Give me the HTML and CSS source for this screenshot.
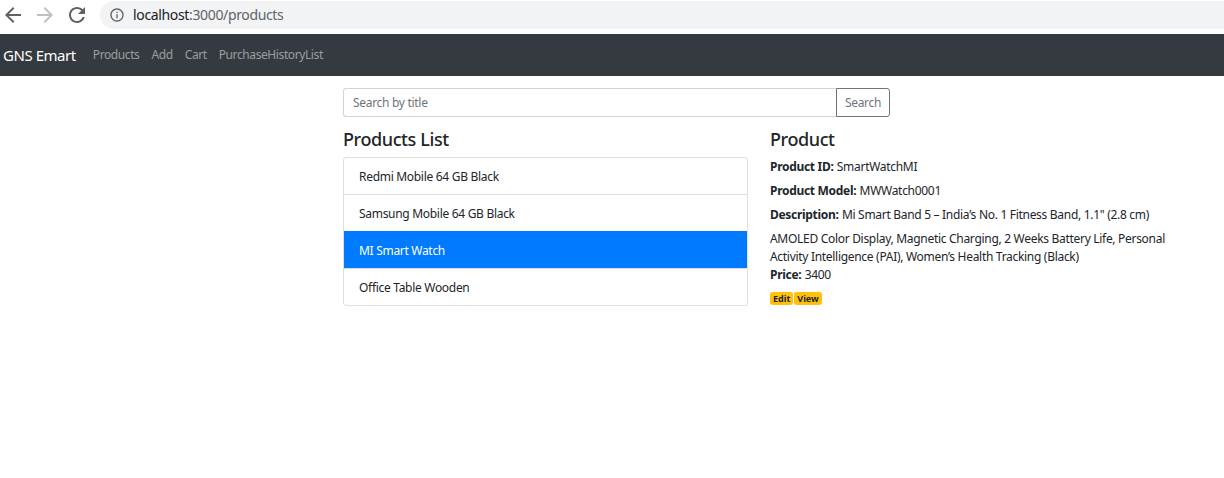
FILE: index.html
```html
<!DOCTYPE html>
<html lang="en">
<head>
<meta charset="utf-8">
<title>GNS Emart</title>
<link rel="stylesheet" href="styles.css">
</head>
<body>
<div class="chrome">
  <div class="nav-buttons">
    <svg class="cicon" viewBox="0 0 24 24" width="24" height="24"><path fill="#5f6368" d="M20 11H7.83l5.59-5.59L12 4l-8 8 8 8 1.41-1.41L7.83 13H20v-2z"/></svg>
    <svg class="cicon" viewBox="0 0 24 24" width="24" height="24"><path fill="#bdc1c6" d="M4 11h12.17l-5.59-5.59L12 4l8 8-8 8-1.41-1.41L16.17 13H4v-2z"/></svg>
    <svg class="cicon" viewBox="0 0 24 24" width="24" height="24"><path fill="#5f6368" d="M17.65 6.35C16.2 4.9 14.21 4 12 4c-4.42 0-7.99 3.58-7.99 8s3.57 8 7.99 8c3.73 0 6.84-2.55 7.73-6h-2.08c-.82 2.33-3.04 4-5.65 4-3.31 0-6-2.69-6-6s2.69-6 6-6c1.66 0 3.14.69 4.22 1.78L13 11h7V4l-2.35 2.35z"/></svg>
  </div>
  <div class="omnibox">
    <svg class="info" viewBox="0 0 24 24" width="16" height="16"><path fill="#5f6368" d="M11 7h2v2h-2zm0 4h2v6h-2zm1-9C6.48 2 2 6.48 2 12s4.48 10 10 10 10-4.48 10-10S17.52 2 12 2zm0 18c-4.41 0-8-3.59-8-8s3.59-8 8-8 8 3.59 8 8-3.59 8-8 8z"/></svg>
    <span class="url"><span class="host">localhost</span><span class="path">:3000/products</span></span>
  </div>
</div>

<nav class="navbar">
  <a class="brand" href="#">GNS Emart</a>
  <a class="nav-link" href="#">Products</a>
  <a class="nav-link" href="#">Add</a>
  <a class="nav-link" href="#">Cart</a>
  <a class="nav-link" href="#">PurchaseHistoryList</a>
</nav>

<main class="content">
  <div class="search">
    <input class="search-input" type="text" placeholder="Search by title">
    <button class="search-btn" type="button">Search</button>
  </div>
  <div class="columns">
    <section class="list-col">
      <h4 class="heading">Products List</h4>
      <ul class="list-group">
        <li class="list-item">Redmi Mobile 64 GB Black</li>
        <li class="list-item">Samsung Mobile 64 GB Black</li>
        <li class="list-item active">MI Smart Watch</li>
        <li class="list-item">Office Table Wooden</li>
      </ul>
    </section>
    <section class="detail-col">
      <h4 class="heading">Product</h4>
      <div class="fields">
        <div class="field"><label class="lbl"><strong>Product ID:</strong></label> SmartWatchMI</div>
        <div class="field"><label class="lbl"><strong>Product Model:</strong></label> MWWatch0001</div>
        <div class="field"><label class="lbl"><strong>Description:</strong></label> Mi Smart Band 5 – India’s No. 1 Fitness Band, 1.1" (2.8 cm) AMOLED Color Display, Magnetic Charging, 2 Weeks Battery Life, Personal Activity Intelligence (PAI), Women’s Health Tracking (Black)</div>
        <div class="field"><label class="lbl"><strong>Price:</strong></label> 3400</div>
      </div>
      <div class="badges"><a class="badge" href="#">Edit</a><a class="badge" href="#">View</a></div>
    </section>
  </div>
</main>
</body>
</html>
```

FILE: styles.css
```css
* { box-sizing: border-box; }
html, body { margin: 0; padding: 0; }
body {
  font-family: "Noto Sans", "Open Sans", Arial, sans-serif;
  font-size: 12px;
  line-height: 18px;
  letter-spacing: -0.3px;
  color: #212529;
  background: #fff;
}

/* browser chrome */
.chrome {
  height: 34px;
  display: flex;
  align-items: flex-start;
  background: #fff;
}
.nav-buttons {
  display: flex;
  gap: 8px;
  padding-left: 1px;
  padding-top: 3px;
}
.cicon { display: block; }
.omnibox {
  margin-left: 11px;
  margin-top: 1px;
  height: 28px;
  flex: 1;
  background: #f1f3f4;
  border-radius: 14px 0 0 14px;
  display: flex;
  align-items: center;
  padding-left: 9px;
  gap: 8px;
}
.info { display: block; }
.url {
  font-size: 14px;
  letter-spacing: -0.35px;
}
.host { color: #202124; }
.path { color: #5f6368; }

/* navbar */
.navbar {
  height: 42px;
  background: #343a40;
  display: flex;
  align-items: center;
  padding-left: 3px;
}
.brand {
  color: #fff;
  font-size: 15px;
  text-decoration: none;
  margin-right: 11px;
  letter-spacing: -0.45px;
}
.nav-link {
  color: rgba(255,255,255,0.5);
  text-decoration: none;
  padding: 0 6px;
  font-size: 12px;
  letter-spacing: -0.4px;
}

/* content */
.content {
  padding-left: 343px;
  padding-top: 12px;
}
.search {
  display: flex;
  width: 547px;
  height: 29px;
  margin-bottom: 12px;
}
.search-input {
  flex: 1;
  font: inherit;
  font-size: 12px;
  letter-spacing: -0.3px;
  border: 1px solid #ced4da;
  border-right: none;
  border-radius: 3px 0 0 3px;
  padding: 0 9px;
  color: #495057;
  outline: none;
}
.search-input::placeholder { color: #6c757d; opacity: 1; }
.search-btn {
  width: 54px;
  font: inherit;
  font-size: 12px;
  letter-spacing: -0.3px;
  background: #fff;
  color: #6c757d;
  border: 1px solid #6c757d;
  border-radius: 0 3px 3px 0;
  padding: 1px 0 0;
}
.columns {
  display: flex;
  gap: 22px;
}
.heading {
  margin: 0 0 8px;
  font-size: 18px;
  line-height: 20px;
  font-weight: 500;
  letter-spacing: -0.4px;
}
.list-col { width: 405px; }
.list-group {
  list-style: none;
  margin: 0;
  padding: 0;
  border: 1px solid rgba(0,0,0,0.125);
  border-radius: 3px;
  overflow: hidden;
}
.list-item {
  height: 37px;
  padding: 10px 15px 8px;
  border-top: 1px solid rgba(0,0,0,0.125);
  line-height: 18px;
}
.list-item:first-child { border-top: none; height: 36px; }
.list-item.active {
  background: #007bff;
  color: #fff;
  border-top-color: #007bff;
}
.detail-col { width: 405px; }
.fields { padding-top: 1px; }
.lbl {
  display: inline-block;
  margin-bottom: 6px;
  padding-right: 0.5px;
}
.lbl strong { font-weight: 700; }
.badges { display: flex; gap: 1px; margin-top: 2px; }
.badge {
  display: inline-block;
  background: #ffc107;
  color: #212529;
  font-size: 9px;
  font-weight: 700;
  line-height: 10px;
  letter-spacing: 0;
  padding: 2px 3px 1px;
  border-radius: 3px;
  text-decoration: none;
}
```
